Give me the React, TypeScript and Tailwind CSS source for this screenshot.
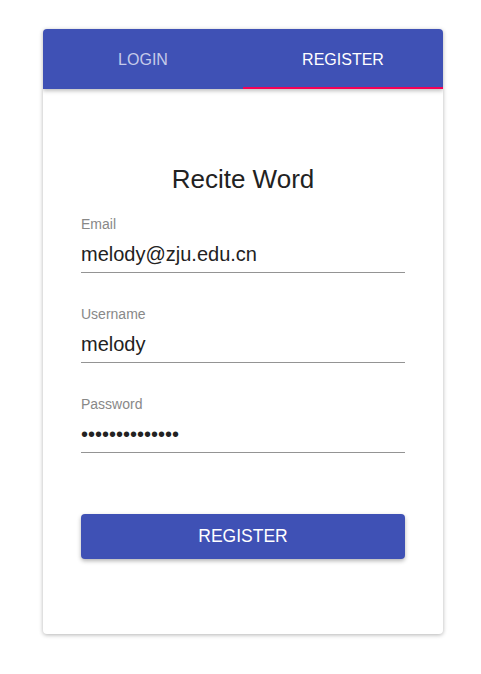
import { useState } from "react";

const Field = ({ label, value, type }: { label: string; value: string; type?: string }) => (
  <div className="flex flex-col">
    <label className="text-[14px] leading-[20px] text-[#888]">{label}</label>
    <input
      type={type || "text"}
      defaultValue={value}
      className="mt-[6px] h-[28px] pb-[4px] box-content text-[20px] leading-[28px] text-[#222] border-b border-[#949494] outline-none bg-transparent"
    />
  </div>
);

const App = () => {
  const [tab, setTab] = useState(1);

  return (
    <div className="min-h-[674px] bg-white pt-[29px] font-['Liberation_Sans',Arial,sans-serif]">
      <div className="ml-[43px] w-[400px] bg-white rounded-[4px] shadow-[0_1px_4px_rgba(0,0,0,0.3)] overflow-hidden">
        <div className="flex h-[60px] bg-[#3f51b5] shadow-[0_2px_4px_rgba(0,0,0,0.25)]">
          {["LOGIN", "REGISTER"].map((t, i) => (
            <button
              key={t}
              onClick={() => setTab(i)}
              className={`flex-1 flex items-center justify-center text-[16px] border-b-2 pt-[3px] ${
                tab === i ? "text-white border-[#f50057]" : "text-[#c5cae9] border-transparent"
              }`}
            >
              {t}
            </button>
          ))}
        </div>
        <div className="px-[38px] pt-[74px] pb-[75px]">
          <h1 className="text-center text-[26px] leading-[32px] text-[#222]">Recite Word</h1>
          <div className="mt-[19px] flex flex-col gap-[31px]">
            <Field label="Email" value="melody@zju.edu.cn" />
            <Field label="Username" value="melody" />
            <Field label="Password" value="melodymelody12" type="password" />
          </div>
          <button className="mt-[61px] w-full h-[45px] rounded-[4px] bg-[#3f51b5] text-white text-[17.5px] shadow-[0_2px_4px_rgba(0,0,0,0.3)]">
            REGISTER
          </button>
        </div>
      </div>
    </div>
  );
};

export default App;
